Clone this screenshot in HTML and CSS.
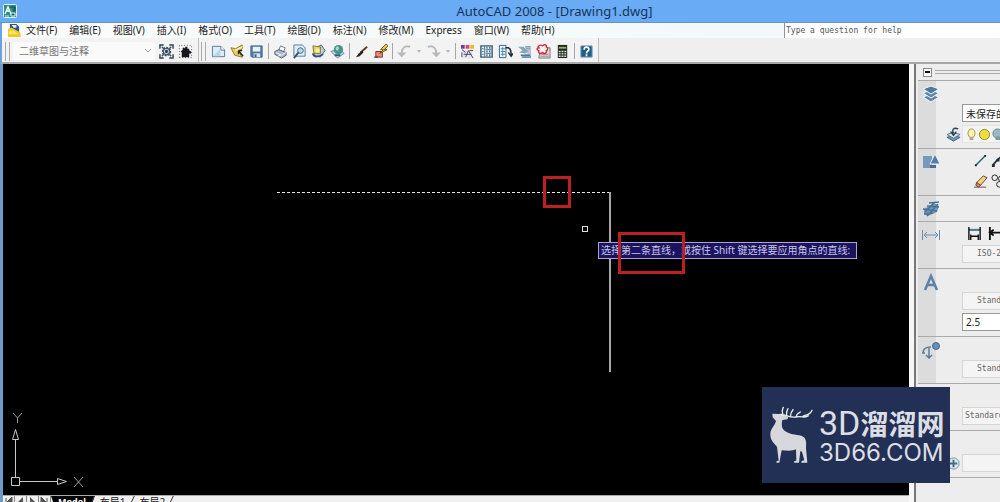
FILE: index.html
```html
<!DOCTYPE html>
<html lang="zh-CN">
<head>
<meta charset="utf-8">
<title>AutoCAD 2008 - [Drawing1.dwg]</title>
<link rel="stylesheet" href="styles.css">
</head>
<body>
<div class="app">
  <header class="titlebar">
    <svg class="app-icon" viewBox="0 0 14 14"><rect x=".5" y=".5" width="13" height="13" rx="1" fill="#2f8f86" stroke="#d8f2f0"/><path d="M2 10L5 3l3 7M3 7h4" stroke="#fff" stroke-width="1.3" fill="none"/><path d="M7 3h5v4M11 3v6" stroke="#0e4d50" fill="none"/><path d="M8 9h4v3H8z" fill="#125c5c" stroke="#e2ffff"/><path d="M2 12h4" stroke="#bff0e8"/></svg>
    <h1 class="title">AutoCAD 2008 - [Drawing1.dwg]</h1>
  </header>
  <nav class="menubar">
    <svg class="doc-icon" viewBox="0 0 14 14"><path d="M2 0h7l3 3v7H2z" fill="#285a86"/><path d="M4 1h5v3H6z" fill="#e6eef4"/><path d="M0 5l4-1 9 5 1 5H0z" fill="#f0c928"/><path d="M1 8l5-1 5 4H1z" fill="#ffe766"/></svg>
    <button>文件(F)</button><button>编辑(E)</button><button>视图(V)</button><button>插入(I)</button><button>格式(O)</button><button>工具(T)</button><button>绘图(D)</button><button>标注(N)</button><button>修改(M)</button><button>Express</button><button>窗口(W)</button><button>帮助(H)</button>
    <input class="help-box" type="text" aria-label="Help" placeholder="Type a question for help">
  </nav>
  <div class="toolbars">
    <div class="toolbar">
      <span class="grip"></span>
      <select class="workspace" aria-label="工作空间"><option>二维草图与注释</option></select>
      <button class="tool" aria-label="工作空间设置"><svg viewBox="0 0 16 16"><path d="M1 5V1h4M11 1h4v4M15 11v4h-4M5 15H1v-4" stroke="#31424e" stroke-width="1.5" fill="none"/><circle cx="8" cy="8" r="4" fill="#aec3cf" stroke="#3c5363" stroke-width="2" stroke-dasharray="2 1"/><circle cx="8" cy="8" r="3.500" fill="none" stroke="#3c5363"/><circle cx="8" cy="8" r="1.500" fill="#26353f"/><path d="M3 3l2 2M13 3l-2 2M3 13l2-2M13 13l-2-2" stroke="#3c5363" stroke-width="1.500"/></svg></button>
      <button class="tool" aria-label="我的工作空间"><svg viewBox="0 0 16 16"><path d="M1.500 14.500v-13h13v13z" fill="none" stroke="#555" stroke-dasharray="1 2"/><path d="M3 8l2-2V4h2v1l1-2h2v2h2v2l2 1v2h-2v4H4V9z" fill="#15191d"/></svg></button>
    </div>
    <div class="toolbar toolbar-main">
      <span class="grip"></span>
      <button class="tool" aria-label="新建"><svg viewBox="0 0 16 16"><path d="M1.500 2.500h9l4 4v7h-13z" fill="#dcecf6" stroke="#557991"/><path d="M10.500 2.500v4h4" fill="#fff" stroke="#557991"/><path d="M2 13l8-8v8z" fill="#b9d5e8"/></svg></button>
      <button class="tool" aria-label="打开"><svg viewBox="0 0 16 16"><path d="M1 4l5 1 7-4v4l-4 3 4 6-8-2z" fill="#edcf65" stroke="#8c752a"/><path d="M5 6l9-4-5 6z" fill="#fff0a6"/><path d="M9 7l5 6M9 7v4M9 7h4" stroke="#282716" stroke-width="1.500"/></svg></button>
      <button class="tool" aria-label="保存"><svg viewBox="0 0 16 16"><path d="M2 2h12v12H3l-1-1z" fill="#527da9" stroke="#39658f"/><path d="M4 3h8v5H4z" fill="#eaf3fa"/><path d="M5 10h7v4H5z" fill="#d9e3eb"/><path d="M6 11h2v3H6z" fill="#345a7e"/></svg></button>
      <span class="sep"></span>
      <button class="tool" aria-label="打印"><svg viewBox="0 0 16 16"><path d="M6 7l2-5 5 2-2 5" fill="#fff" stroke="#657991"/><path d="M2 8l4-2 8 3v3l-5 3-7-4z" fill="#aab8ca" stroke="#485b78"/><path d="M3 9l6 3 5-3M5 13l3-1" stroke="#f6fafd" fill="none"/></svg></button>
      <button class="tool" aria-label="打印预览"><svg viewBox="0 0 16 16"><path d="M2 1h9l3 3v9H2z" fill="#e0edf6" stroke="#56789a"/><circle cx="9" cy="7" r="3" fill="#b9d6ec" stroke="#3d668b"/><path d="M7 9l-5 6" stroke="#36536c" stroke-width="2"/></svg></button>
      <button class="tool" aria-label="发布"><svg viewBox="0 0 16 16"><path d="M5 4l6-3 4 6-5 7-7-2z" fill="#bad0df" stroke="#445e73"/><path d="M2 2l8 1v7H3z" fill="#e7d456" stroke="#87792e"/><path d="M5 5h4v4H5z" fill="#f9efad"/><path d="M2 10c1 5 6 4 11 1" stroke="#2d5477" stroke-width="2" fill="none"/></svg></button>
      <button class="tool" aria-label="三维DWF"><svg viewBox="0 0 16 16"><path d="M1 8l9-3 5 5-7 5z" fill="#c5d8e8" stroke="#6d889b"/><circle cx="9" cy="6" r="5" fill="#4a948f"/><path d="M6 4c3-3 4 0 3 2s-3 1-3-2" fill="#b7dcc1"/><path d="M5 12h6" stroke="#31577b" stroke-width="2"/></svg></button>
      <span class="sep"></span>
      <button class="tool" aria-label="特性匹配"><svg viewBox="0 0 16 16"><path d="M14 3L7 9" stroke="#5b3b21" stroke-width="2"/><path d="M9 7l1 2-4 4-4 1 3-4z" fill="#27221d"/></svg></button>
      <button class="tool" aria-label="块编辑器"><svg viewBox="0 0 16 16"><path d="M3 8h7v6H3z" fill="#e88c7a" stroke="#8c2622"/><path d="M14 0L8 6h3l-4 4 8-4h-3l4-4z" fill="#f2cb42" stroke="#5d501e"/><path d="M1 14h4" stroke="#272727"/></svg></button>
      <span class="sep"></span>
      <button class="tool" aria-label="放弃"><svg viewBox="0 0 16 16"><path d="M14 3C8 1 5 5 5 10" fill="none" stroke="#b9b9b9" stroke-width="2"/><path d="M0 9h10l-5 5z" fill="#b9b9b9"/></svg></button>
      <button class="drop" aria-label="放弃列表"></button>
      <button class="tool" aria-label="重做"><svg viewBox="0 0 16 16"><path d="M2 3c6-2 9 2 9 7" fill="none" stroke="#b9b9b9" stroke-width="2"/><path d="M6 9h10l-5 5z" fill="#b9b9b9"/></svg></button>
      <button class="drop" aria-label="重做列表"></button>
      <span class="sep"></span>
      <button class="tool" aria-label="特性"><svg viewBox="0 0 16 16"><path d="M1 1h4v4H1z" fill="#713a9c"/><path d="M6 1h4v4H6z" fill="#d94664"/><path d="M11 1h4v4h-4z" fill="#e7b72e"/><path d="M2 6h11v9H2z" fill="#e4e5ee"/><path d="M2 6l4 3M6 14l3-7 5 8M2 9v5M4 11h8M10 7h4" fill="none" stroke="#4c4155"/></svg></button>
      <button class="tool" aria-label="设计中心"><svg viewBox="0 0 16 16"><path d="M2 2h12v12H2z" fill="#e3eff4" stroke="#355f7a" stroke-width="1.500"/><path d="M6 2v12M7 6h6M7 10h6M3 5h2M3 8h2M3 11h2" stroke="#507b92"/><path d="M8 4h1M11 4h1M8 8h1M11 8h1M8 12h1M11 12h1" stroke="#153952" stroke-width="2"/></svg></button>
      <button class="tool" aria-label="工具选项板"><svg viewBox="0 0 16 16"><path d="M1.500 1.500h7v13h-7z" fill="#e8f4fa" stroke="#2d6688"/><path d="M3 5h5M3 8h5M3 11h5M5 3v10" stroke="#5488a2"/><path d="M8 4h3c3 1 3 4 3 9M11 9l3 4 2-3" stroke="#222d37" stroke-width="1.500" fill="none"/></svg></button>
      <button class="tool" aria-label="图纸集"><svg viewBox="0 0 16 16"><path d="M8 2h7v12H5l6-4z" fill="#b7c8d3"/><path d="M1 3h6l5 5-3 2-7-1 4-2z" fill="#86a6ba"/><path d="M4 12h10M5 14h10" stroke="#47799b" stroke-width="1.500"/><path d="M9 3h5M10 5h4" stroke="#7e96a4"/></svg></button>
      <button class="tool" aria-label="标记集"><svg viewBox="0 0 16 16"><path d="M5 4h10v11H3z" fill="#dadadd" stroke="#81747b"/><path d="M5 13h9M6 11h7" stroke="#9c8d93"/><path d="M3 2c2-2 3 0 4 0 2-2 5-1 4 1 2 1 2 3 0 4 1 3-2 4-4 2-2 2-5 1-4-2-3-1-2-3 0-3-1-1-1-2 0-2z" fill="#fff1f1" stroke="#d42936" stroke-width="1.500"/></svg></button>
      <button class="tool" aria-label="计算器"><svg viewBox="0 0 16 16"><path d="M3 1h10v14H3z" fill="#1d261f"/><path d="M4 3h8v2H4z" fill="#96af68"/><path d="M4 8h8M4 10.500h8M4 13h8" stroke="#e1e4db" stroke-width="1.500" stroke-dasharray="2 1"/></svg></button>
      <span class="sep"></span>
      <button class="tool" aria-label="帮助"><svg viewBox="0 0 16 16"><path d="M2 2h12v12H2z" fill="#235c87" stroke="#79a1bc"/><path d="M5.500 6c0-4 5-3 5-.5C10.500 8 8 7 8 10M8 11v2" fill="none" stroke="#fff" stroke-width="1.800"/></svg></button>
    </div>
  </div>
  <div class="work">
    <main class="drawing">
      <div class="canvas">
        <svg class="model" width="880" height="400"><path d="M274 128.500H607" stroke="#e8e8e8" stroke-dasharray="3 2"/><path d="M607 128v180" stroke="#a6a6a6" stroke-width="2"/><rect x="579.500" y="162.500" width="5" height="5" fill="none" stroke="#e1e1d8"/></svg>
        <div class="prompt">选择第二条直线，或按住 Shift 键选择要应用角点的直线:</div>
        <span class="mark mark-first"></span>
        <span class="mark mark-second"></span>
        <svg class="ucs" viewBox="0 0 84 81" width="84" height="81"><g fill="none" stroke="#c8c8c8"><path d="M12.500 65V27M9.500 27.500l3-10 3 10zM17 69.500h37M54.500 66.500l9 3-9 3z"/><path d="M8.500 65.500h8v8h-8z"/></g><g fill="none" stroke="#9e9e9e"><path d="M10 1l4.500 5L19 1M14.500 6v5M71 65l9 10M80 65l-9 10"/></g></svg>
      </div>
      <div class="tabs">
        <div class="tab-nav"><button aria-label="首个"><svg viewBox="0 0 11 11"><path d="M3 2v8M9 1L4 6l5 5z" fill="#555" stroke="#555"/></svg></button><button aria-label="上一个"><svg viewBox="0 0 11 11"><path d="M8 1L3 6l5 5z" fill="#555"/></svg></button><button aria-label="下一个"><svg viewBox="0 0 11 11"><path d="M3 1l5 5-5 5z" fill="#555"/></svg></button><button aria-label="末个"><svg viewBox="0 0 11 11"><path d="M8 2v8M2 1l5 5-5 5z" fill="#555" stroke="#555"/></svg></button></div>
        <button class="tab tab-on">Model</button><button class="tab">布局1</button><button class="tab">布局2</button>
      </div>
    </main>
    <aside class="dash">
      <div class="dash-head"><button class="collapse" aria-label="折叠"></button><span class="rails"></span></div>
      <section class="group tall">
        <div class="strip"><svg viewBox="0 0 18 18"><path d="M1 12l8-3 8 3-8 5z" fill="#6186aa" stroke="#f3f8fc"/><path d="M1 8l8-3 8 3-8 5z" fill="#6186aa" stroke="#f3f8fc"/><path d="M1 4l8-3 8 3-8 5z" fill="#53799f" stroke="#f3f8fc"/></svg></div>
        <div class="rows">
          <div class="row"><input class="field white" value="未保存的图层状态" aria-label="图层状态"></div>
          <div class="row with-icon"><svg viewBox="0 0 16 16"><path d="M1 11l7-2 7 2-7 4z" fill="#7395b1" stroke="#40607d"/><path d="M1 8l6-2 8 2-7 4z" fill="#dce7ef" stroke="#547591"/><path d="M13 2C8 0 6 3 8 7M5 5l3 4 3-4" fill="none" stroke="#243f5e" stroke-width="1.500"/></svg><div class="field icons"><svg viewBox="0 0 14 14"><path d="M5 10C2 7 3 1 7 1s5 6 2 9z" fill="#fff5a4" stroke="#9e8c4b"/><path d="M5 11h4v2H5z" fill="#9d9e91"/></svg><svg viewBox="0 0 14 14"><circle cx="7" cy="7" r="5.500" fill="#f0dd35" stroke="#8b863e"/></svg><svg viewBox="0 0 14 14"><circle cx="7" cy="6" r="5" fill="#9bb8c5" stroke="#648593"/><path d="M5 9h6v4H5z" fill="#799b99"/></svg></div></div>
        </div>
      </section>
      <section class="group">
        <div class="strip"><svg viewBox="0 0 18 18"><path d="M1 3h9v12H1z" fill="#7598bb"/><path d="M13 1l5 10H8z" fill="#527ba6" stroke="#e8f0f7"/><path d="M8 12h6v3H8z" fill="#496e96"/></svg></div>
        <div class="rows">
          <div class="row glyphs"><svg viewBox="0 0 16 16"><path d="M3 13L13 3" stroke="#226260" stroke-width="1.500"/><path d="M2 12h2v2H2zM12 2h2v2h-2z" fill="#172a36"/></svg><svg viewBox="0 0 16 16"><path d="M2 13l5-6 5-4" fill="none" stroke="#253941" stroke-width="2"/><path d="M1 12h3v3H1zM6 6h3v3H6z" fill="#172a36"/></svg></div>
          <div class="row glyphs"><svg viewBox="0 0 16 16"><path d="M1 14h13" stroke="#723d32"/><path d="M4 9l7-7 4 2-7 8-4-1z" fill="#f2cf7a" stroke="#654432"/><path d="M4 9l4 3-2 2-3-2z" fill="#d98278" stroke="#6b3b3a"/></svg><svg viewBox="0 0 16 16"><circle cx="4" cy="4" r="3" fill="none" stroke="#222"/><circle cx="11" cy="5" r="3" fill="none" stroke="#222"/><circle cx="9" cy="11" r="3" fill="none" stroke="#222"/></svg></div>
        </div>
      </section>
      <section class="group short">
        <div class="strip"><svg viewBox="0 0 18 18"><path d="M2 9l10-6 5 3-2 6-9 4-4-2z" fill="#7398bb"/><path d="M7 3l10-1M5 6l12 1M1 9l14 2M2 14l9-1M5 16L16 4M3 12l9-9" stroke="#4a7199" stroke-width="1.500"/></svg></div>
      </section>
      <section class="group">
        <div class="strip"><svg viewBox="0 0 18 18"><path d="M.5 4v10M17.500 4v10M2 9h14M5 6L2 9l3 3M13 6l3 3-3 3" fill="none" stroke="#6a8bad"/></svg></div>
        <div class="rows">
          <div class="row glyphs dims"><svg viewBox="0 0 16 16"><path d="M2 1v14M14 1v14M2 4h12M4 9v6M12 9v6M4 11h8" fill="none" stroke="#111" stroke-width="1.500"/><path d="M3 3h10v2H3z" fill="#4b8199"/></svg><span class="bar"></span><svg viewBox="0 0 16 16"><path d="M2 1v14M2 7h14M6 4L2 7l4 3" fill="none" stroke="#111" stroke-width="2"/></svg></div>
          <div class="row"><button class="field style">ISO-25</button></div>
        </div>
      </section>
      <section class="group tall">
        <div class="strip"><svg viewBox="0 0 18 18"><path d="M3 17L9 3l6 14M5 12h8" fill="none" stroke="#5c81a9" stroke-width="2.500"/></svg></div>
        <div class="rows">
          <div class="row"><button class="field style">Standard</button></div>
          <div class="row"><input class="field white" value="2.5" aria-label="文字高度"></div>
        </div>
      </section>
      <section class="group">
        <div class="strip"><svg viewBox="0 0 18 18"><circle cx="14" cy="5" r="3.500" fill="#6390bd" stroke="#44688d"/><path d="M1 12C1 8 4 6 9 6M7 7v10M4 14l3 3 3-3M0 12h3" fill="none" stroke="#5b7e9f" stroke-width="1.500"/></svg></div>
        <div class="rows"><div class="row"><button class="field style">Standard</button></div></div>
      </section>
      <section class="group">
        <div class="rows bare"><div class="row"><button class="field style wide">Standard</button></div></div>
      </section>
      <section class="group">
        <div class="rows bare"><div class="row with-icon"><svg viewBox="0 0 16 16"><circle cx="8" cy="8" r="6" fill="#dbe7ec" stroke="#75909e"/><path d="M8 4v8M4 8h8" stroke="#426c84" stroke-width="2"/></svg><input class="field" aria-label="视图"></div></div>
      </section>
      <div class="dash-end"></div>
    </aside>
  </div>
  <div class="brand">
    <svg class="deer" viewBox="50 68 138 178"><path d="M63 93l18 1 10-1 12 7 8 3-3 7-15 2c-3 14-3 25 9 34 13 9 30 10 48 13 17 6 15 22 14 38l4 43h-18l1-5 8-2-7-26-5-2-4 35h-15l1-5 6-1-1-34c-16 7-30 3-43 3l-7 37H75l1-5 6-1-5-42c-11-13-20-19-20-38 0-16 13-23 17-39l-10-11z" fill="#d6d8dc"/><path d="M88 96c14-2 27 10 45 7 20-4 28 5 38-4M94 93c-4-9 0-13 2-19M106 95c-2-8 2-12 4-17M118 99c-1-8 4-12 7-18M135 101c0-7 8-10 12-13M155 101c8-5 22-3 27-18" fill="none" stroke="#eceef0" stroke-width="4" stroke-linecap="round"/></svg>
    <div class="brand-text"><span class="brand-name">3D<b>溜溜网</b></span><span class="brand-site">3D66.COM</span></div>
  </div>
</div>
</body>
</html>
```
FILE: styles.css
```css
* { box-sizing: border-box; }
body { margin: 0; overflow: hidden; font: 10px/15px "Noto Sans", "Noto Sans CJK SC", sans-serif; color: #222; }
button, input, select { font: inherit; color: inherit; border: 0; border-radius: 0; padding: 0; margin: 0; background: none; outline: 0; }
svg { display: block; flex: none; }
.app { position: relative; display: flex; flex-direction: column; height: 100vh; background: #f0f0f0; overflow: hidden; }

.titlebar { display: flex; align-items: center; flex: none; height: 23px; padding-left: 3px; background: #6aabf6; border-bottom: 1px solid #6792c4; }
.app-icon { width: 14px; height: 14px; }
.title { flex: 1; margin: 0; padding-left: 92px; text-align: center; font: 13px/20px "Noto Sans", sans-serif; color: #163459; }

.menubar { display: flex; align-items: center; flex: none; gap: 12px; height: 15px; padding-left: 6px; border-left: 2px solid #6ba3e0; background: linear-gradient(90deg, #fbfcfc, #f0f8fa); white-space: nowrap; }
.menubar button { line-height: 15px; }
.doc-icon { width: 13px; height: 13px; margin-right: -7px; }
.help-box { width: 216px; height: 15px; margin-left: auto; padding-left: 1px; border-left: 1px solid #8c9297; background: #fff; font: 8px/14px "DejaVu Sans Mono", monospace; }
.help-box::placeholder { color: #555; opacity: 1; }

.toolbars { display: flex; flex: none; height: 26px; border-left: 2px solid #6ba3e0; border-bottom: 2px solid #a8a8a8; background: #efefef; }
.toolbar { display: flex; align-items: center; height: 24px; padding: 2px 3px 0; background: #f3f3f3; border-right: 1px solid #bcbcbc; }
.toolbar-main { padding-left: 2px; padding-right: 2px; }
.grip { width: 5px; height: 19px; margin-right: 3px; border-left: 1px solid #aaa; border-right: 1px solid #aaa; }
.workspace { appearance: none; width: 142px; height: 18px; margin-right: 2px; padding-left: 6px; color: #777; background: url("data:image/svg+xml,%3Csvg xmlns='http://www.w3.org/2000/svg' width='8' height='6'%3E%3Cpath d='M1 1l3 3 3-3' fill='none' stroke='%23999'/%3E%3C/svg%3E") right 3px center no-repeat #fafafa; }
.tool { display: flex; align-items: center; justify-content: center; width: 19px; height: 20px; }
.tool svg { width: 15px; height: 15px; }
.sep { flex: none; width: 1px; height: 16px; margin: 0 2px; background: #a6a6a6; }
.drop { width: 10px; height: 16px; display: flex; align-items: center; justify-content: center; }
.drop::before { content: ""; border: 2px solid transparent; border-top: 3px solid #b5b5b5; border-bottom: 0; }

.work { display: flex; flex: 1; min-height: 0; }
.drawing { display: flex; flex-direction: column; flex: 1; min-width: 0; border-left: 3px solid #6c9cc8; }
.canvas { position: relative; flex: 1; min-height: 0; background: #000; overflow: hidden; }
.model { position: absolute; left: 0; top: 0; }
.ucs { position: absolute; left: 0; bottom: 2px; }
.prompt { position: absolute; left: 595px; top: 178px; height: 17px; padding: 0 6px 0 2px; border: 1px solid #a8a6cc; background: #1b1360; color: #c9c6e6; line-height: 15px; white-space: nowrap; }
.mark { position: absolute; border: 3px solid #bd2020; }
.mark-first { left: 540px; top: 112px; width: 28px; height: 32px; }
.mark-second { left: 615px; top: 168px; width: 67px; height: 42px; }
.tabs { display: flex; align-items: flex-start; flex: none; height: 7px; overflow: hidden; background: #f0f0f0; border-top: 1px solid #aaa; }
.tab-nav { display: flex; }
.tab-nav button { width: 12px; border-right: 1px solid #888; }
.tab-nav svg { width: 11px; height: 11px; }
.tab { display: flex; padding-left: 5px; line-height: 12px; }
.tab::after { content: ""; width: 1px; height: 12px; margin: 0 3px 0 5px; background: #333; transform: skewX(-25deg); }
.tab-on { padding-left: 7px; background: #000; color: #fff; font-weight: bold; font-size: 9px; clip-path: polygon(0 0, 100% 0, 90% 100%, 10% 100%); }

.dash { flex: none; width: 91px; overflow: hidden; padding-left: 5px; background: linear-gradient(90deg, #f7f7f7 5px, #777 5px, #777 7px, #ededed 7px); }
.dash-head { display: flex; align-items: center; gap: 3px; height: 16px; padding-left: 9px; }
.collapse { display: flex; align-items: center; justify-content: center; flex: none; width: 9px; height: 9px; border: 1px solid #888; background: #fff; }
.collapse::before { content: ""; width: 5px; height: 2px; background: #111; }
.rails { flex: 1; height: 4px; border-top: 1px solid #aaa; border-bottom: 1px solid #aaa; }
.group { display: flex; height: 47px; margin-left: 4px; border-top: 1px solid #aaa; }
.tall { height: 68px; }
.short { height: 26px; }
.strip { flex: none; width: 18px; padding: 4px 0 0 4px; background: #dcdcdc; }
.strip svg { width: 18px; height: 18px; }
.rows { display: flex; flex-direction: column; justify-content: flex-end; gap: 3px; flex: 1; min-width: 0; padding: 0 0 5px 10px; }
.bare { padding-left: 28px; }
.row { display: flex; align-items: center; flex: none; height: 18px; padding-left: 16px; }
.with-icon { padding-left: 0; gap: 1px; }
.row svg { width: 15px; height: 15px; }
.glyphs { gap: 3px; padding-left: 27px; }
.dims { padding-left: 21px; }
.bar { width: 1px; height: 16px; background: #666; }
.field { flex: none; width: 140px; height: 18px; padding-left: 3px; border: 1px solid #d5d5d5; background: #f4f4f4; text-align: left; }
.white { border-color: #999; background: #fff; }
.icons { display: flex; align-items: center; padding-left: 2px; border-color: #e2e2e2; }
.icons svg { width: 13px; height: 13px; }
.style { padding-left: 14px; font: 8px/14px "DejaVu Sans Mono", monospace; color: #666; }
.wide { padding-left: 2px; }
.dash-end { margin-left: 4px; border-top: 1px solid #aaa; }

.brand { position: absolute; right: 50px; bottom: 19px; display: flex; align-items: center; width: 188px; height: 96px; padding-left: 6px; gap: 5px; background: #233056; color: #dcdee3; }
.deer { width: 46px; height: 60px; }
.brand-text { display: flex; flex-direction: column; white-space: nowrap; }
.brand-name { display: flex; align-items: center; font: 34px/36px Roboto, sans-serif; }
.brand-name b { font: 700 28px/36px "Noto Sans CJK SC", sans-serif; }
.brand-site { font: 24px/24px Inter, sans-serif; }
```
